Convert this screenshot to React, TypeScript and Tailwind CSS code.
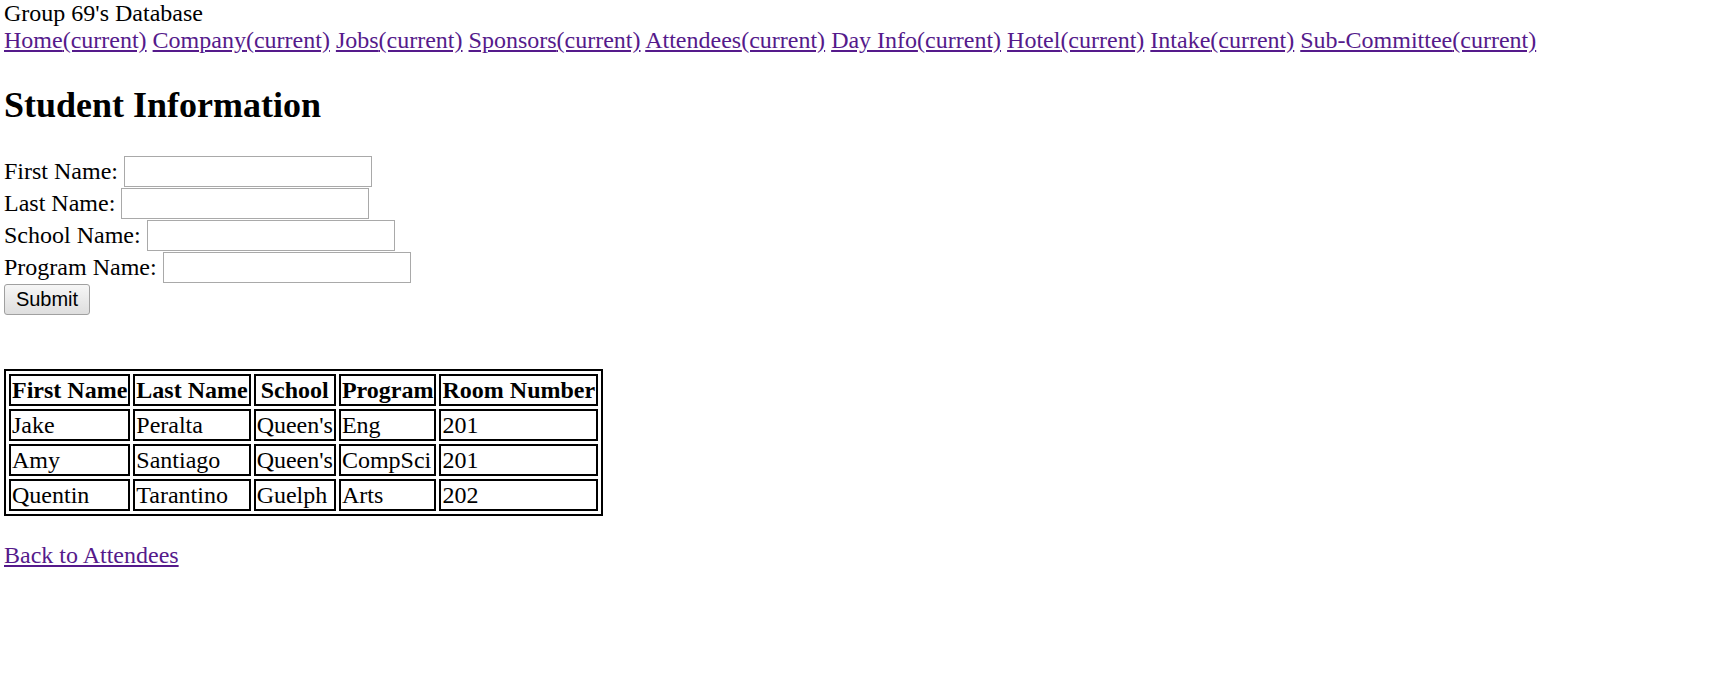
const navItems = [
  "Home",
  "Company",
  "Jobs",
  "Sponsors",
  "Attendees",
  "Day Info",
  "Hotel",
  "Intake",
  "Sub-Committee",
];

const fields = ["First Name", "Last Name", "School Name", "Program Name"];

const headers = ["First Name", "Last Name", "School", "Program", "Room Number"];

const students = [
  ["Jake", "Peralta", "Queen's", "Eng", "201"],
  ["Amy", "Santiago", "Queen's", "CompSci", "201"],
  ["Quentin", "Tarantino", "Guelph", "Arts", "202"],
];

const NavBar = () => {
  return (
    <div className="whitespace-nowrap">
      {navItems.map((item, i) => (
        <span key={item}>
          <a href="#" className="text-[#551a8b] underline">
            {item}(current)
          </a>
          {i < navItems.length - 1 ? " " : ""}
        </span>
      ))}
    </div>
  );
};

const StudentForm = () => {
  return (
    <form onSubmit={(e) => e.preventDefault()}>
      {fields.map((field) => (
        <div key={field} className="flex h-[32px] items-center">
          <label>{field}:</label>
          <input
            type="text"
            className="ml-[6px] h-[31px] w-[248px] border border-[#a9a9a9] bg-white px-[3px] font-['Liberation_Sans',sans-serif] text-[20px] outline-none"
          />
        </div>
      ))}
      <div className="flex h-[32px] items-center">
        <button
          type="submit"
          className="h-[31px] w-[86px] rounded-[3px] border border-[#a0a0a0] bg-gradient-to-b from-[#f6f6f6] to-[#dedede] font-['Liberation_Sans',sans-serif] text-[20px] leading-none text-black"
        >
          Submit
        </button>
      </div>
    </form>
  );
};

const StudentTable = () => {
  return (
    <table className="border-separate border-spacing-[3px] border-2 border-black">
      <thead>
        <tr>
          {headers.map((h) => (
            <th
              key={h}
              className="border-2 border-black px-[1px] py-0 text-center font-bold leading-[28px]"
            >
              {h}
            </th>
          ))}
        </tr>
      </thead>
      <tbody>
        {students.map((row) => (
          <tr key={row[0]}>
            {row.map((cell, i) => (
              <td
                key={i}
                className="border-2 border-black px-[1px] py-0 text-left leading-[28px]"
              >
                {cell}
              </td>
            ))}
          </tr>
        ))}
      </tbody>
    </table>
  );
};

export default function App() {
  return (
    <div className="min-h-screen bg-white pl-[4px] font-['Liberation_Serif',serif] text-[24px] leading-[normal] text-black">
      <div>Group 69's Database</div>
      <NavBar />
      <h2 className="mt-[30px] mb-[29px] text-[36px] font-bold leading-[normal]">
        Student Information
      </h2>
      <StudentForm />
      <div className="h-[54px]" />
      <StudentTable />
      <div className="mt-[26px]">
        <a href="#" className="text-[#551a8b] underline">
          Back to Attendees
        </a>
      </div>
    </div>
  );
}
